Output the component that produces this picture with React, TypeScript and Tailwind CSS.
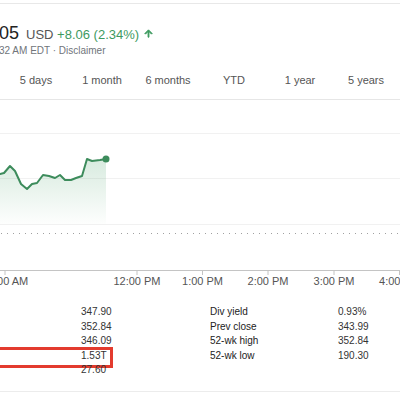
import React from 'react';

const tabs = ['5 days', '1 month', '6 months', 'YTD', '1 year', '5 years'];

const points: [number, number][] = [
  [-5, 76], [0, 74], [4, 73], [10, 66], [15, 71], [21, 84], [27, 89], [32, 84], [37, 83],
  [43, 75], [49, 76], [55, 78], [60, 75], [65, 80], [71, 80], [76, 78], [82, 76],
  [87, 59], [92, 61], [100, 60], [106, 59],
];

const ticks = [
  { x: 5, label: '10:00 AM' },
  { x: 137, label: '12:00 PM' },
  { x: 202.5, label: '1:00 PM' },
  { x: 268, label: '2:00 PM' },
  { x: 334, label: '3:00 PM' },
  { x: 399.5, label: '4:00 PM' },
];

const leftStats = [
  { label: 'Open', value: '347.90' },
  { label: 'High', value: '352.84' },
  { label: 'Low', value: '346.09' },
  { label: 'Mkt cap', value: '1.53T', marked: true },
  { label: 'P/E ratio', value: '27.60' },
];

const rightStats = [
  { label: 'Div yield', value: '0.93%' },
  { label: 'Prev close', value: '343.99' },
  { label: '52-wk high', value: '352.84' },
  { label: '52-wk low', value: '190.30' },
];

function Chart() {
  const line = points.map(p => p.join(',')).join(' ');
  const area = `${line} 106,124 -5,124`;
  return (
    <svg width="400" height="192" viewBox="0 0 400 192" className="block">
      <defs>
        <linearGradient id="fill" x1="0" y1="0" x2="0" y2="1">
          <stop offset="0%" stopColor="#3d9a5f" stopOpacity="0.2" />
          <stop offset="100%" stopColor="#3d9a5f" stopOpacity="0.01" />
        </linearGradient>
      </defs>
      <line x1="0" y1="33.5" x2="400" y2="33.5" stroke="#f1f1f1" />
      <line x1="0" y1="78.5" x2="400" y2="78.5" stroke="#f1f1f1" />
      <line x1="0" y1="124.5" x2="400" y2="124.5" stroke="#f1f1f1" />
      <polygon points={area} fill="url(#fill)" />
      <polyline points={line} fill="none" stroke="#3d8c5c" strokeWidth="2" strokeLinejoin="round" />
      <circle cx="106" cy="59" r="3.5" fill="#3d8c5c" />
      <line x1="1" y1="133.5" x2="400" y2="133.5" stroke="#a0a0a0" strokeDasharray="1 5" />
      <line x1="0" y1="170.5" x2="400" y2="170.5" stroke="#c4c4c4" />
      {ticks.map(t => (
        <g key={t.label}>
          <line x1={t.x} y1="170" x2={t.x} y2="175" stroke="#c4c4c4" />
          <text
            x={t.x}
            y="185"
            textAnchor="middle"
            fontSize="11"
            fill="#555"
            fontFamily="'Liberation Sans', Arial, sans-serif"
          >
            {t.label}
          </text>
        </g>
      ))}
    </svg>
  );
}

export default function App() {
  return (
    <div className="w-[400px] h-[400px] overflow-hidden bg-white font-['Liberation_Sans',Arial,sans-serif]">
      <div className="h-[3px]" />
      <div className="border-t border-[#e8e8e8]" />

      {/* Price header */}
      <div className="mt-[18px] -ml-[1px] flex items-baseline h-[22px] leading-[22px] whitespace-nowrap">
        <span className="text-[18px] text-[#222]">05</span>
        <span className="ml-[7px] text-[13px] text-[#555]">USD</span>
        <span className="ml-[3.6px] text-[13px] text-[#3d9a5f]">+8.06 (2.34%)</span>
        <svg width="11" height="11" viewBox="0 0 24 24" className="ml-[4px] self-center">
          <path d="M4 12l1.41 1.41L11 7.83V20h2V7.83l5.58 5.59L20 12l-8-8-8 8z" fill="#3d9a5f" stroke="#3d9a5f" strokeWidth="2" />
        </svg>
      </div>
      <div className="-ml-[1px] h-[14px] leading-[14px] text-[10px] text-[#70757a] whitespace-nowrap">
        32 AM EDT · Disclaimer
      </div>

      {/* Range tabs */}
      <div className="pt-[14px] pb-[11px] border-b border-[#e6e6e6]">
        <div className="flex ml-[3px]">
          {tabs.map(t => (
            <div key={t} className="w-[66px] text-center text-[11px] leading-[16px] text-[#555] whitespace-nowrap">
              {t}
            </div>
          ))}
        </div>
      </div>

      <Chart />

      {/* Key stats */}
      <div className="mt-[13px] flex text-[10px] leading-[14.6px] whitespace-nowrap">
        <div className="w-[113px]">
          {leftStats.map(s => (
            <div key={s.label} className="relative pl-[81px] text-[#333]">
              {s.value}
              {s.marked && (
                <div className="absolute -left-[10px] right-0 -top-[2px] -bottom-[5px] border-[3px] border-[#e33b2e]" />
              )}
            </div>
          ))}
        </div>
        <div className="ml-[97px]">
          {rightStats.map(s => (
            <div key={s.label} className="flex">
              <span className="w-[128px] text-[#222]">{s.label}</span>
              <span className="text-[#333]">{s.value}</span>
            </div>
          ))}
        </div>
      </div>
      <div className="mt-[13px] border-t border-[#ececec]" />
    </div>
  );
}
